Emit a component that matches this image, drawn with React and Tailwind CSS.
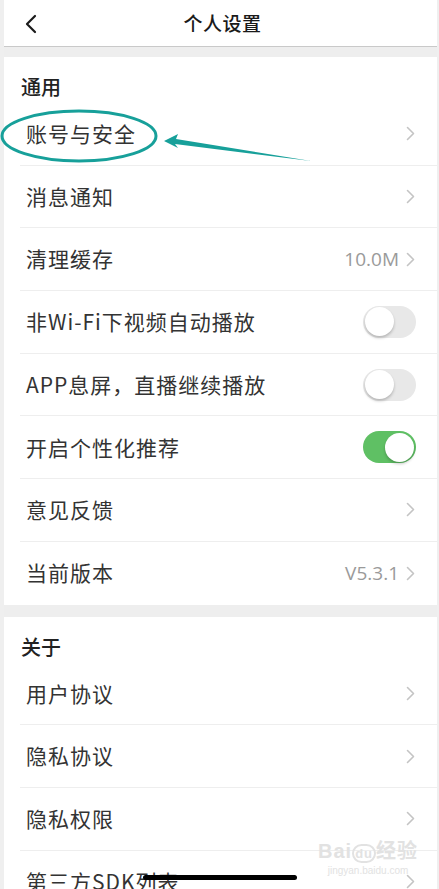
import React from "react";

const font = { fontFamily: '"Noto Sans CJK SC", "Noto Sans", sans-serif' };

function Chevron() {
  return (
    <svg width="9" height="15" viewBox="0 0 9 15" className="shrink-0">
      <path d="M1.5 1.5 L7.5 7.5 L1.5 13.5" fill="none" stroke="#c4c4c4" strokeWidth="1.6" strokeLinecap="round" strokeLinejoin="round" />
    </svg>
  );
}

function Toggle({ on }) {
  return (
    <div
      className={
        "w-[53px] h-[32px] rounded-full p-[2px] flex items-center shrink-0 " +
        (on ? "bg-[#5fc064] justify-end" : "bg-[#e8e8e8] justify-start")
      }
    >
      <div className="w-[29px] h-[29px] rounded-full bg-white shadow-[0_2px_3px_rgba(0,0,0,0.22)]" />
    </div>
  );
}

function Row({ label, value, toggle, last }) {
  return (
    <div className={"ml-[16px] h-[62.7px] flex items-center " + (last ? "" : "border-b border-[#eeeeee]")}>
      <span className="pl-[6px] flex-1 text-[21px] tracking-[1px] text-[#333333]">{label}</span>
      {toggle !== undefined ? (
        <div className="pr-[21px]">
          <Toggle on={toggle} />
        </div>
      ) : (
        <div className="pr-[22px] flex items-center gap-[7px]">
          {value && <span className="text-[19px] text-[#9a9a9a]" style={{ fontFamily: '"Open Sans", "Noto Sans", sans-serif' }}>{value}</span>}
          <Chevron />
        </div>
      )}
    </div>
  );
}

function Section({ title, children }) {
  return (
    <div className="bg-white">
      <div className="h-[46px] pl-[17px] pt-[19px] text-[20px] leading-[22px] font-medium text-[#222222]">{title}</div>
      {children}
    </div>
  );
}

export default function App() {
  return (
    <div className="relative w-[439px] h-[889px] overflow-hidden bg-[#efefef] pl-[4px] pr-[2px]" style={font}>
      <div className="bg-[#eeeeee] h-full">
        {/* Header */}
        <div className="h-[47px] bg-white border-b border-[#c9c9c9] flex items-center relative">
          <svg width="14" height="20" viewBox="0 0 14 20" className="absolute left-[20px] top-[14px]">
            <path d="M11 2 L3 10 L11 18" fill="none" stroke="#1a1a1a" strokeWidth="2.2" strokeLinecap="round" strokeLinejoin="round" />
          </svg>
          <div className="flex-1 text-center text-[19px] font-medium text-[#1a1a1a] tracking-[0.5px] pl-[4px]">个人设置</div>
        </div>
        <div className="h-[10px]" />

        <Section title="通用">
          <Row label="账号与安全" />
          <Row label="消息通知" />
          <Row label="清理缓存" value="10.0M" />
          <Row label="非Wi-Fi下视频自动播放" toggle={false} />
          <Row label="APP息屏，直播继续播放" toggle={false} />
          <Row label="开启个性化推荐" toggle={true} />
          <Row label="意见反馈" />
          <Row label="当前版本" value="V5.3.1" last />
        </Section>
        <div className="h-[12px]" />

        <Section title="关于">
          <Row label="用户协议" />
          <Row label="隐私协议" />
          <Row label="隐私权限" />
          <Row label="第三方SDK列表" />
        </Section>
      </div>

      {/* Annotation overlay */}
      <svg className="absolute left-0 top-0 pointer-events-none" width="439" height="200" viewBox="0 0 439 200">
        <ellipse cx="79" cy="136" rx="77" ry="25" fill="none" stroke="#17a09a" strokeWidth="3" />
        <polygon points="164,141 178,134 176,139 311,161 175,144 178,148" fill="#17a09a" />
      </svg>

      {/* Watermark */}
      <div className="absolute left-[318px] top-[840px] flex flex-col items-center pointer-events-none text-[#e2e2e2]">
        <span className="text-[20px] font-bold leading-[22px] tracking-[1px]" style={{ fontFamily: '"Liberation Sans", "Noto Sans CJK SC", sans-serif' }}>Bai<span className="border-2 border-[#e2e2e2] rounded-full px-[1px] text-[13px]">du</span>经验</span>
        <span className="text-[10px] leading-[12px]" style={{ fontFamily: '"Liberation Sans", sans-serif' }}>jingyan.baidu.com</span>
      </div>

      {/* Home indicator */}
      <div className="absolute left-[143px] top-[875px] w-[154px] h-[5px] rounded-full bg-black" />
    </div>
  );
}
